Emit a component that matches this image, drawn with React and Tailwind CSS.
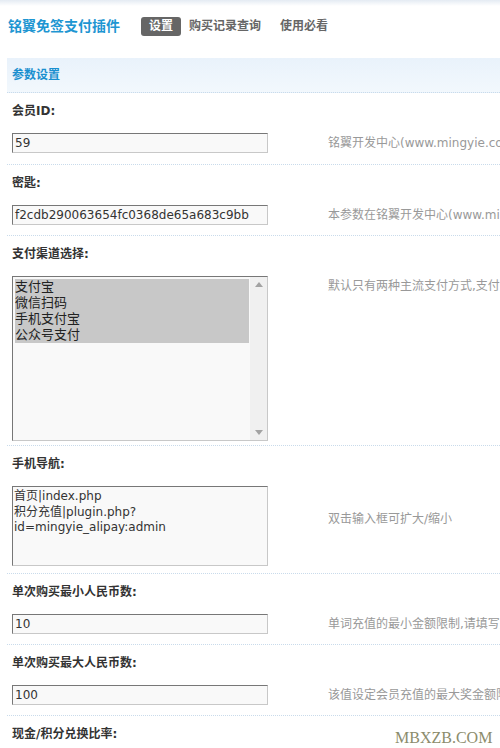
import React from "react";

const FONT = { fontFamily: '"DejaVu Sans", "Noto Sans CJK SC", sans-serif' };

function Label({ children }) {
  return (
    <div className="h-[36px] flex items-center pl-[5px] text-[12px] font-bold text-[#333]">
      {children}
    </div>
  );
}

function TextInput({ value }) {
  return (
    <div className="w-[256px] h-[20px] border border-t-[#777] border-l-[#777] border-r-[#c8c8c8] border-b-[#c8c8c8] bg-[#f9f9f9] pl-[2px] flex items-center text-[12px] text-[#333] leading-none whitespace-nowrap overflow-hidden">
      {value}
    </div>
  );
}

function Desc({ children, className = "" }) {
  return (
    <div className={"text-[12px] text-[#999] whitespace-nowrap leading-[16px] " + className}>
      {children}
    </div>
  );
}

function InputRow({ label, value, desc, pb = "pb-[10px]" }) {
  return (
    <div className="border-b border-dotted border-b-[#c9dbeb]">
      <Label>{label}</Label>
      <div className={"grid grid-cols-[316px_1fr] items-center pt-[4px] pl-[5px] " + pb}>
        <TextInput value={value} />
        <Desc>{desc}</Desc>
      </div>
    </div>
  );
}

export default function App() {
  const options = ["支付宝", "微信扫码", "手机支付宝", "公众号支付"];
  return (
    <div className="relative w-[500px] h-[748px] overflow-hidden bg-white" style={FONT}>
      <div className="h-[6px] bg-gradient-to-b from-[#e4ebf3] to-white" />
      <div className="h-[40px] flex items-center pl-[8px]">
        <div className="text-[14px] font-bold text-[#1e96d2] mr-[21px]">铭翼免签支付插件</div>
        <div className="flex items-center text-[12px] font-bold">
          <span className="px-[8px] h-[19px] flex items-center rounded-[3px] bg-[#666] text-white">设置</span>
          <span className="pl-[8px] pr-[9px] text-[#666]">购买记录查询</span>
          <span className="pl-[10px] text-[#666]">使用必看</span>
        </div>
      </div>
      <div className="ml-[7px] mt-[12px]">
        <div className="h-[35px] flex items-center pl-[5px] bg-gradient-to-b from-[#e9f2fb] to-[#f2f8fd] border-b border-dotted border-b-[#c9dbeb] text-[12px] font-bold text-[#1a8fcf]">
          参数设置
        </div>

        <InputRow label="会员ID:" value="59" desc="铭翼开发中心(www.mingyie.com)注册获取" pb="pb-[11px]" />
        <InputRow label="密匙:" value="f2cdb290063654fc0368de65a683c9bb" desc="本参数在铭翼开发中心(www.mingyie.com)获取" />

        <div className="border-b border-dotted border-b-[#c9dbeb]">
          <Label>支付渠道选择:</Label>
          <div className="grid grid-cols-[316px_1fr] items-start pt-[4px] pb-[4px] pl-[5px]">
            <div className="w-[256px] h-[165px] border border-t-[#777] border-l-[#777] border-r-[#c8c8c8] border-b-[#c8c8c8] bg-[#f9f9f9] flex">
              <div className="flex-1 pl-[2px] pt-[2px] pr-[1px]">
                {options.map((o) => (
                  <div key={o} className="h-[16px] leading-[16px] bg-[#c8c8c8] text-[13px] text-[#222]">{o}</div>
                ))}
              </div>
              <div className="w-[17px] bg-[#f0f0f0] flex flex-col items-center justify-between py-[5px]">
                <svg width="8" height="5" viewBox="0 0 8 5"><path d="M4 0 L8 5 L0 5 Z" fill="#a3a3a3" /></svg>
                <svg width="8" height="5" viewBox="0 0 8 5"><path d="M0 0 L8 0 L4 5 Z" fill="#a3a3a3" /></svg>
              </div>
            </div>
            <Desc className="pt-[2px]">默认只有两种主流支付方式,支付宝和微信</Desc>
          </div>
        </div>

        <div className="border-b border-dotted border-b-[#c9dbeb]">
          <Label>手机导航:</Label>
          <div className="grid grid-cols-[316px_1fr] items-start pt-[4px] pb-[7px] pl-[5px]">
            <div className="w-[256px] h-[80px] border border-t-[#777] border-l-[#777] border-r-[#c8c8c8] border-b-[#c8c8c8] bg-[#f9f9f9] pl-[1px] pt-[2px] text-[12px] leading-[15.5px] text-[#333]">
              <div>首页|index.php</div>
              <div>积分充值|plugin.php?</div>
              <div>id=mingyie_alipay:admin</div>
            </div>
            <Desc className="mt-[25px]">双击输入框可扩大/缩小</Desc>
          </div>
        </div>

        <InputRow label="单次购买最小人民币数:" value="10" desc="单词充值的最小金额限制,请填写整数" />
        <InputRow label="单次购买最大人民币数:" value="100" desc="该值设定会员充值的最大奖金额限制" />
        <InputRow label="现金/积分兑换比率:" value="10" desc="1元人民币可兑换的积分数" />
      </div>
      <div
        className="absolute left-[395px] top-[726px] text-[16px] text-[#8c8c6c]"
        style={{ fontFamily: '"Liberation Serif", serif' }}
      >
        MBXZB.COM
      </div>
    </div>
  );
}
